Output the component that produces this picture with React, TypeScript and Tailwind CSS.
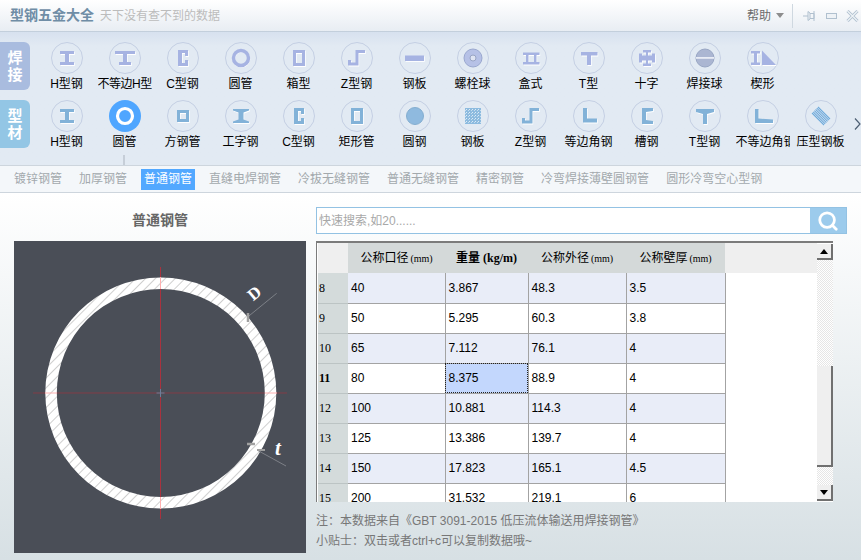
import React from "react";
import { Search } from "lucide-react";

const P: Record<string, string> = {
  h: "M9 9h14v3h-5v8h5v3H9v-3h5v-8H9z",
  uh: "M6 9h20v3h-8v8h4v3H10v-3h4v-8H6z",
  c: "M11 8h10v6h-3v-3h-3v10h3v-3h3v6H11z",
  box: "M10 8h12v16H10zM13 11v10h6V11z",
  square: "M10 10h12v12H10zM13 13v6h6v-6z",
  z: "M7 18h3v2.5h4.5V8h9.5v3h-6.5v12.5H7z",
  plate: "M6 13.5h19V19H6z",
  box2: "M8 10.5h16.500v2.500h-3v7h3v2.500H8V20h3v-7H8zM13.500 13v7h5.500v-7z",
  t: "M8 10h16.500v3.500h-6.500V23h-4v-9.500H8z",
  cross: "M12 8h8v2.500h-3v3h4v-2h3v9h-3v-2h-4v3h3V24h-8v-2.500h3v-3h-4v2H8v-9h3v2h4v-3h-3z",
  wedge: "M4 9h9v2.500h-3v9h3V23H4v-2.500h3v-9H4zM15 8.500l14 14.500H15z",
  ibeam: "M8 9h16v1.500l-5.500 2v7l5.500 2V23H8v-1.500l5.500-2v-7l-5.500-2z",
  angle: "M10 8h4v10.500h10v4H10z",
  channel: "M11 8h11v3l-7 1v8l7 1v3H11z",
  tee: "M7 9h18v3l-7 2v10h-4V14l-7-2z",
  uangle: "M8 9h3.500v9.500l14.500 1V23H8z",
};

function Shape({ d, color }: { d: string; color: string }) {
  return (
    <>
      <path d={d} fill="#fff" fillRule="evenodd" transform="translate(0.7 0.9)" />
      <path d={d} fill={color} fillRule="evenodd" />
    </>
  );
}

const BLUE = "#a6b3e2";
const SKY = "#82b2d8";

function Glyph({ name, color }: { name: string; color: string }) {
  if (P[name]) return <Shape d={P[name]} color={color} />;
  if (name === "ring")
    return (
      <>
        <circle cx="16.400" cy="16.600" r="7.500" fill="none" stroke="#fff" strokeWidth="3" />
        <circle cx="16" cy="16" r="7.500" fill="none" stroke={color} strokeWidth="3.500" />
      </>
    );
  if (name === "bolt")
    return (
      <>
        <circle cx="16" cy="16" r="9" fill="#b6c1e6" stroke="#9aa8cf" />
        <circle cx="16" cy="16" r="3" fill="#dfe4f2" stroke="#98a4c4" />
      </>
    );
  if (name === "ball")
    return (
      <>
        <circle cx="16" cy="16" r="9" fill="#abb6d2" stroke="#98a6c4" />
        <rect x="7" y="15" width="18" height="1.800" fill="#e8ecf5" />
      </>
    );
  if (name === "round")
    return <circle cx="16" cy="16" r="8.500" fill="#8fbadf" stroke="#84aed0" />;
  if (name === "dots")
    return (
      <>
        <rect x="8" y="8" width="16" height="16" fill="#8dbbdf" />
        <rect x="8" y="8" width="16" height="16" fill="url(#dotted)" />
      </>
    );
  if (name === "deck")
    return (
      <g stroke="#6fabdc" strokeWidth="1.100">
        {[0, 1, 2, 3, 4, 5].map((t) => (
          <line key={t} x1={7 + 1.2 * t} y1={13 - 1.2 * t} x2={19 + 1.2 * t} y2={25 - 1.2 * t} />
        ))}
      </g>
    );
  return null;
}

function Item({ label, icon, color, active, tight }: { label: string; icon: string; color: string; active?: boolean; tight?: boolean }) {
  return (
    <div className="flex w-[58px] shrink-0 flex-col items-center">
      {active ? (
        <svg width="32" height="32" viewBox="0 0 32 32" className="block">
          <circle cx="16" cy="16" r="16" fill="#4fa6ff" />
          <circle cx="16" cy="16" r="7.500" fill="none" stroke="#fff" strokeWidth="3.200" />
        </svg>
      ) : (
        <svg width="32" height="32" viewBox="0 0 32 32" className="block">
          <circle cx="16" cy="16" r="15.500" fill="none" stroke="#c4cfe3" />
          <Glyph name={icon} color={color} />
        </svg>
      )}
      <div className={`mt-[2px] w-[54px] overflow-hidden text-center text-[12px] leading-4 whitespace-nowrap text-black ${tight ? "tracking-[-0.5px]" : ""}`}>
        {label}
      </div>
    </div>
  );
}

const row1: [string, string][] = [
  ["H型钢", "h"], ["不等边H型", "uh"], ["C型钢", "c"], ["圆管", "ring"], ["箱型", "box"], ["Z型钢", "z"], ["钢板", "plate"],
  ["螺栓球", "bolt"], ["盒式", "box2"], ["T型", "t"], ["十字", "cross"], ["焊接球", "ball"], ["楔形", "wedge"],
];
const row2: [string, string][] = [
  ["H型钢", "h"], ["圆管", "ring"], ["方钢管", "square"], ["工字钢", "ibeam"], ["C型钢", "c"], ["矩形管", "box"], ["圆钢", "round"],
  ["钢板", "dots"], ["Z型钢", "z"], ["等边角钢", "angle"], ["槽钢", "channel"], ["T型钢", "tee"], ["不等边角钢", "uangle"], ["压型钢板", "deck"],
];
const tabs = ["镀锌钢管", "加厚钢管", "普通钢管", "直缝电焊钢管", "冷拔无缝钢管", "普通无缝钢管", "精密钢管", "冷弯焊接薄壁圆钢管", "圆形冷弯空心型钢"];
const rows = [
  ["8", "40", "3.867", "48.3", "3.5"],
  ["9", "50", "5.295", "60.3", "3.8"],
  ["10", "65", "7.112", "76.1", "4"],
  ["11", "80", "8.375", "88.9", "4"],
  ["12", "100", "10.881", "114.3", "4"],
  ["13", "125", "13.386", "139.7", "4"],
  ["14", "150", "17.823", "165.1", "4.5"],
  ["15", "200", "31.532", "219.1", "6"],
];

function Tag({ text, bg }: { text: string; bg: string }) {
  return (
    <div className={`flex h-12 w-[30px] shrink-0 flex-col items-center justify-center rounded-r-md text-[15px] leading-[17px] font-bold text-white ${bg}`}>
      <span>{text[0]}</span>
      <span>{text[1]}</span>
    </div>
  );
}

function Diagram() {
  return (
    <svg width="292" height="312" viewBox="0 0 292 312" className="block">
      <defs>
        <pattern id="hatch" width="7" height="7" patternUnits="userSpaceOnUse" patternTransform="rotate(45)">
          <rect width="7" height="7" fill="#fff" />
          <line x1="0" y1="0" x2="0" y2="7" stroke="#a8a8a8" strokeWidth="1.100" />
        </pattern>
      </defs>
      <rect width="292" height="312" fill="#4a4e57" />
      <line x1="146.500" y1="26" x2="146.500" y2="278" stroke="#a8323e" />
      <line x1="19" y1="152" x2="273" y2="152" stroke="#a8323e" strokeOpacity="0.600" />
      <path
        fillRule="evenodd"
        fill="url(#hatch)"
        d="M31.300 152a115.500 115.500 0 1 0 231 0a115.500 115.500 0 1 0-231 0zM42.800 152a104 104 0 1 1 208 0a104 104 0 1 1-208 0z"
      />
      <line x1="146.500" y1="36" x2="146.500" y2="48" stroke="#ffb0b0" />
      <line x1="146.500" y1="256" x2="146.500" y2="268" stroke="#ffb0b0" />
      <line x1="31" y1="152" x2="43" y2="152" stroke="#ffb0b0" />
      <line x1="251" y1="152" x2="263" y2="152" stroke="#ffb0b0" />
      <path d="M142.500 152h8M146.500 148v8" stroke="#6d7f99" />
      <line x1="262.700" y1="52.300" x2="234" y2="75.700" stroke="#7d8087" />
      <line x1="234" y1="72" x2="234" y2="81" stroke="#a0a0a0" strokeWidth="2.500" />
      <text x="240" y="58" fill="#fff" fontSize="17" fontWeight="700" fontFamily="'Liberation Serif',serif" textAnchor="middle" transform="rotate(-40 240 52)">D</text>
      <line x1="272" y1="225" x2="243" y2="209" stroke="#7d8087" />
      <line x1="233" y1="203" x2="241" y2="203" stroke="#a0a0a0" strokeWidth="2.500" />
      <line x1="243" y1="209" x2="251" y2="209" stroke="#a0a0a0" strokeWidth="2" />
      <text x="264" y="214" fill="#fff" fontSize="21" fontWeight="700" fontStyle="italic" fontFamily="'Liberation Serif',serif" textAnchor="middle">t</text>
    </svg>
  );
}

function ScrollBtn({ down }: { down?: boolean }) {
  return (
    <div className="flex h-4 w-4 shrink-0 items-center justify-center border-r-2 border-b-2 border-[#707070] bg-[#efefef]">
      <svg width="8" height="5" viewBox="0 0 8 5">
        <path d={down ? "M0 0h8L4 5z" : "M4 0l4 5H0z"} fill="#000" />
      </svg>
    </div>
  );
}

function Unit({ children }: { children: string }) {
  return <span className="ml-[2px] font-['Liberation_Serif',serif] text-[10px]">{children}</span>;
}

export default function App() {
  return (
    <div className="relative flex h-[560px] w-[861px] flex-col overflow-hidden bg-white font-['Liberation_Sans','Noto_Sans_CJK_SC',sans-serif]">
      {/* title bar */}
      <div className="flex h-8 shrink-0 items-center border-b border-[#c3cfdc] bg-gradient-to-b from-white to-[#e8edf3] pl-[10px]">
        <span className="text-[14px] font-bold text-[#6f8da6]">型钢五金大全</span>
        <span className="ml-[6px] text-[12px] text-[#bcbcbc]">天下没有查不到的数据</span>
        <div className="ml-auto flex items-center">
          <span className="text-[12px] text-[#6b6b6b]">帮助</span>
          <svg width="8" height="5" viewBox="0 0 8 5" className="ml-[5px]"><path d="M0 0h8L4 5z" fill="#8d8d8d" /></svg>
          <div className="ml-2 h-6 w-px bg-[#cfd8e0]" />
          <svg width="14" height="12" viewBox="0 0 14 12" className="ml-[10px]" fill="none" stroke="#b0c0cf">
            <path d="M0 6h5M5 1.500v9l2-1.500V3zM7 3.500h4v5H7M11 1v10" />
          </svg>
          <svg width="11" height="6" viewBox="0 0 11 6" className="ml-[9px]"><rect x="0.500" y="0.500" width="10" height="5" fill="#eef2f6" stroke="#b0c0cf" /></svg>
          <svg width="13" height="12" viewBox="0 0 13 12" className="mr-[2px] ml-[9px]" fill="none">
            <path d="M1.500 1l10 10M11.500 1l-10 10" stroke="#b0c0cf" strokeWidth="3" />
            <path d="M1.500 1l10 10M11.500 1l-10 10" stroke="#eef2f6" strokeWidth="1.200" />
          </svg>
        </div>
      </div>

      {/* toolbar */}
      <div className="relative h-[133px] shrink-0 bg-gradient-to-b from-[#d7e1ef] to-[#e2eaf3] to-[14px] pt-[10px]">
        <svg width="0" height="0" className="absolute">
          <defs>
            <pattern id="dotted" width="3" height="3" patternUnits="userSpaceOnUse">
              <rect x="0" y="0" width="1" height="1" fill="#fff" fillOpacity="0.700" />
              <rect x="2" y="1" width="1" height="1" fill="#fff" fillOpacity="0.500" />
            </pattern>
          </defs>
        </svg>
        <div className="flex h-[58px]">
          <Tag text="焊接" bg="bg-[#a9bcdf]" />
          <div className="ml-[7.5px] flex">
            {row1.map(([l, i]) => <Item key={l} label={l} icon={i} color={BLUE} tight={l === "不等边H型"} />)}
          </div>
        </div>
        <div className="relative flex h-[58px]">
          <Tag text="型材" bg="bg-[#93c6e5]" />
          <div className="ml-[7.5px] flex">
            {row2.map(([l, i], idx) => <Item key={l + idx} label={l} icon={i} color={SKY} active={idx === 1} />)}
          </div>
          <svg width="7" height="12" viewBox="0 0 7 12" className="absolute top-[18px] left-[854px]" fill="none" stroke="#4d5f73" strokeWidth="1.200">
            <path d="M1 0.500L6 6l-5 5.500" />
          </svg>
        </div>
        <div className="absolute top-[123px] left-[123px] h-[10px] w-[2px] bg-[#c6ced8]" />
      </div>

      {/* tabs */}
      <div className="flex h-[28px] shrink-0 items-center gap-[11px] border-y border-[#cdd5dd] bg-[#f4f7fa] pl-[11px]">
        {tabs.map((t, i) => (
          <span key={i} className={`flex h-[21px] items-center px-[3px] text-[12px] ${i === 2 ? "bg-[#52a8ff] text-white" : "text-[#a3a9ad]"}`}>{t}</span>
        ))}
      </div>

      {/* content */}
      <div className="flex min-h-0 flex-1 bg-gradient-to-b from-white to-[#d7e0e4]">
        <div className="w-[316px] shrink-0 pl-[14px]">
          <div className="flex h-[48px] w-[292px] items-center justify-center pt-[6px] text-[14px] font-bold text-[#666]">普通钢管</div>
          <Diagram />
        </div>
        <div className="flex w-[531px] flex-col pt-[14px]">
          <div className="flex h-[27px] shrink-0 border border-[#93c2e3] bg-white">
            <input
              readOnly
              placeholder="快速搜索,如20......"
              className="min-w-0 flex-1 bg-white px-[2px] text-[12px] outline-none placeholder:text-[#a8a8a8]"
            />
            <div className="flex w-9 items-center justify-center bg-[#9ccbec]">
              <Search size={22} color="#fff" strokeWidth={3} />
            </div>
          </div>
          <div className="mt-[7px] flex h-[261px] w-[517px] shrink-0 border-t-2 border-l border-[#7b7b7b] bg-white">
            <div className="ml-px h-[259px] min-w-0 flex-1 overflow-hidden">
              <table className="w-full table-fixed border-collapse text-[12px] text-black">
                <colgroup>
                  <col className="w-[30px]" />
                  <col className="w-[97px]" />
                  <col className="w-[83px]" />
                  <col className="w-[98px]" />
                  <col className="w-[99px]" />
                  <col />
                </colgroup>
                <thead>
                  <tr className="h-[30px]">
                    <th className="bg-[#efefef] p-0" />
                    <th className="bg-[#d4d9d9] p-0 font-normal whitespace-nowrap">公称口径<Unit>(mm)</Unit></th>
                    <th className="bg-[#d4d9d9] p-0 font-bold whitespace-nowrap">重量<span className="ml-[3px] font-['Liberation_Serif',serif] text-[12px]">(kg/m)</span></th>
                    <th className="bg-[#d4d9d9] p-0 font-normal whitespace-nowrap">公称外径<Unit>(mm)</Unit></th>
                    <th className="bg-[#d4d9d9] p-0 font-normal whitespace-nowrap">公称壁厚<Unit>(mm)</Unit></th>
                    <th className="bg-[#efefef] p-0" />
                  </tr>
                </thead>
                <tbody>
                  {rows.map((r, i) => {
                    const bg = i % 2 === 0 ? "bg-[#e9edf8]" : "bg-white";
                    return (
                      <tr key={r[0]} className="h-[30px]">
                        <td className={`border-b border-[#bcc4c4] bg-[#d4dbdb] p-0 pl-[1px] font-['Liberation_Serif',serif] text-[12px] ${r[0] === "11" ? "font-bold" : ""}`}>{r[0]}</td>
                        {r.slice(1).map((c, j) => {
                          const sel = r[0] === "11" && j === 1;
                          return (
                            <td
                              key={j}
                              className={`border-r border-b border-[#a3a3a3] p-0 pl-[3px] ${sel ? "bg-[#c3d7fd] outline-1 outline-offset-[-1px] outline-[#222] outline-dotted" : bg}`}
                            >
                              {c}
                            </td>
                          );
                        })}
                        <td className="p-0" />
                      </tr>
                    );
                  })}
                </tbody>
              </table>
            </div>
            <div className="mt-px flex h-[257px] w-4 shrink-0 flex-col bg-[#f6f6f6] bg-[conic-gradient(#e6e6e6_25%,#fff_0_50%,#e6e6e6_0_75%,#fff_0)] bg-[length:2px_2px]">
              <ScrollBtn />
              <div className="h-[106px] shrink-0" />
              <div className="h-[101px] shrink-0 border-r-2 border-b-2 border-[#707070] bg-[#efefef]" />
              <div className="flex-1" />
              <ScrollBtn down />
            </div>
          </div>
          <div className="mt-[9px] text-[12px] leading-5 text-[#777]">
            <div>注：本数据来自《GBT 3091-2015 低压流体输送用焊接钢管》</div>
            <div>小贴士：双击或者ctrl+c可以复制数据哦~</div>
          </div>
        </div>
      </div>
    </div>
  );
}
